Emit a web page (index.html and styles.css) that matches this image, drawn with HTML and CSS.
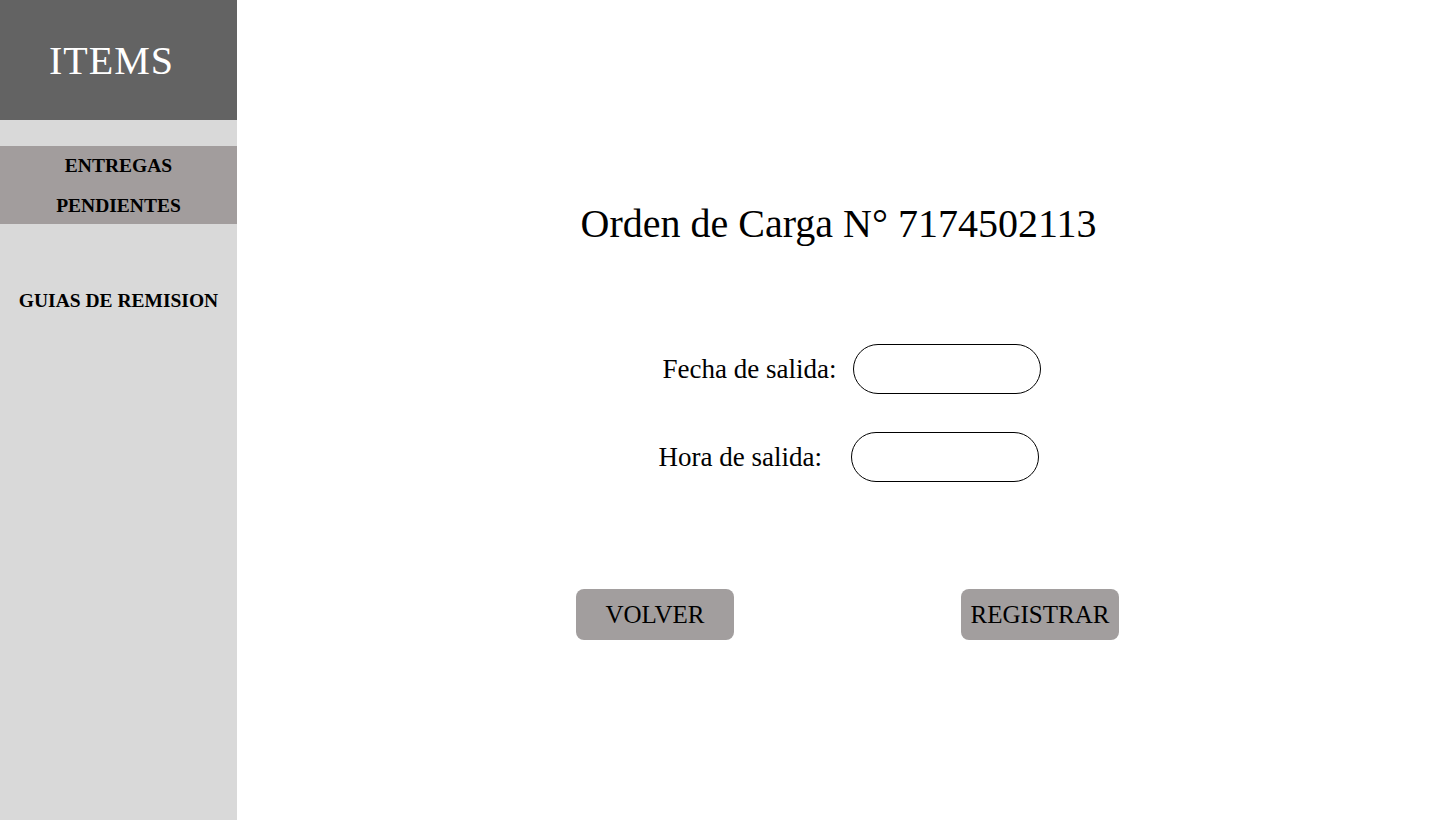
FILE: index.html
```html
<!DOCTYPE html>
<html lang="es">
<head>
<meta charset="utf-8">
<title>Orden de Carga</title>
<link rel="stylesheet" href="styles.css">
</head>
<body>
<div class="app">
  <aside class="sidebar">
    <div class="brand">ITEMS</div>
    <nav class="nav">
      <a class="nav-item active" href="#">ENTREGAS<br>PENDIENTES</a>
      <a class="nav-item" href="#">GUIAS DE REMISION</a>
    </nav>
  </aside>
  <main class="main">
    <h1 class="title">Orden de Carga N° 7174502113</h1>
    <form class="form">
      <div class="row row-fecha">
        <label class="label" for="fecha">Fecha de salida:</label>
        <input class="field" id="fecha" type="text">
      </div>
      <div class="row row-hora">
        <label class="label" for="hora">Hora de salida:</label>
        <input class="field" id="hora" type="text">
      </div>
    </form>
    <div class="actions">
      <button class="btn" type="button">VOLVER</button>
      <button class="btn" type="button">REGISTRAR</button>
    </div>
  </main>
</div>
</body>
</html>
```
FILE: styles.css
```css
* { box-sizing: border-box; }
html, body { margin: 0; padding: 0; height: 100%; }
body { font-family: "Liberation Serif", "DejaVu Serif", serif; background: #fff; color: #000; }
.app { display: flex; height: 820px; }
.sidebar { width: 237px; background: #d9d9d9; display: flex; flex-direction: column; flex-shrink: 0; }
.brand { height: 120px; background: #636363; color: #fff; font-size: 40px; display: flex; align-items: center; justify-content: center; padding-right: 14px; letter-spacing: 1px; }
.nav { display: flex; flex-direction: column; margin-top: 26px; }
.nav-item { display: block; text-align: center; color: #000; text-decoration: none; font-weight: bold; font-size: 19.5px; line-height: 41px; }
.nav-item.active { background: #a29d9d; height: 78px; line-height: 40px; }
.nav-item:not(.active) { margin-top: 56px; }
.main { flex: 1; display: flex; flex-direction: column; align-items: center; }
.title { font-weight: normal; font-size: 40px; margin: 196px 0 0 0; line-height: 56px; }
.form { display: flex; flex-direction: column; gap: 38px; margin-top: 92px; }
.row { display: flex; align-items: center; }
.row-fecha { margin-left: 27px; gap: 17px; }
.row-hora { margin-left: 23px; gap: 29px; }
.label { font-size: 27px; }
.field { width: 188px; height: 50px; border: 1px solid #000; border-radius: 25px; background: #fff; }
.actions { display: flex; justify-content: space-between; width: 543px; margin-top: 107px; margin-left: 18px; }
.btn { width: 158px; height: 51px; background: #a29e9e; border: none; border-radius: 8px; font-family: inherit; font-size: 25px; color: #000; padding: 0; }
```
